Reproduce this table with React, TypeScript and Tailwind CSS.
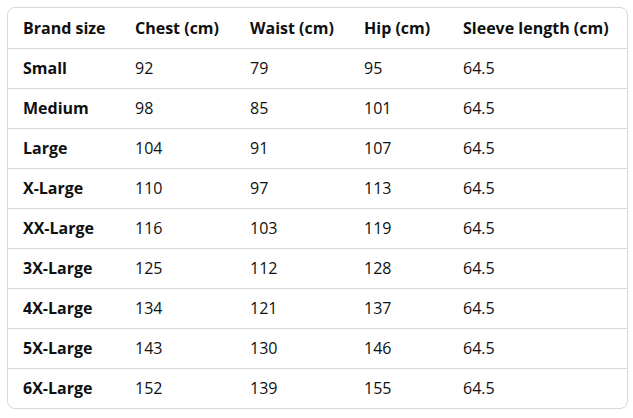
import React from "react";

const rows: [string, string, string, string, string][] = [
  ["Small", "92", "79", "95", "64.5"],
  ["Medium", "98", "85", "101", "64.5"],
  ["Large", "104", "91", "107", "64.5"],
  ["X-Large", "110", "97", "113", "64.5"],
  ["XX-Large", "116", "103", "119", "64.5"],
  ["3X-Large", "125", "112", "128", "64.5"],
  ["4X-Large", "134", "121", "137", "64.5"],
  ["5X-Large", "143", "130", "146", "64.5"],
  ["6X-Large", "152", "139", "155", "64.5"],
];

const headers = ["Brand size", "Chest (cm)", "Waist (cm)", "Hip (cm)", "Sleeve length (cm)"];
const widths = ["w-[112px]", "w-[115px]", "w-[114px]", "w-[99px]", "w-auto"];

export default function App() {
  return (
    <div className="w-[633px] h-[418px] bg-white pt-[7px] pl-[7px] font-['Open_Sans','Noto_Sans',sans-serif] text-[#0f1111] text-[16px]">
      <div className="w-[621px] border border-[#d5d9d9] rounded-[8px] overflow-hidden">
        <table className="w-full border-collapse table-fixed">
          <thead>
            <tr className="h-[40px]">
              {headers.map((h, i) => (
                <th key={h} className={`${widths[i]} text-left font-bold pl-[15px] align-middle whitespace-nowrap`}>
                  {h}
                </th>
              ))}
            </tr>
          </thead>
          <tbody>
            {rows.map((r) => (
              <tr key={r[0]} className="h-[40px] border-t border-[#d5d9d9]">
                {r.map((c, i) => (
                  <td key={i} className={`pl-[15px] align-middle ${i === 0 ? "font-bold" : "font-normal"}`}>
                    {c}
                  </td>
                ))}
              </tr>
            ))}
          </tbody>
        </table>
      </div>
    </div>
  );
}
